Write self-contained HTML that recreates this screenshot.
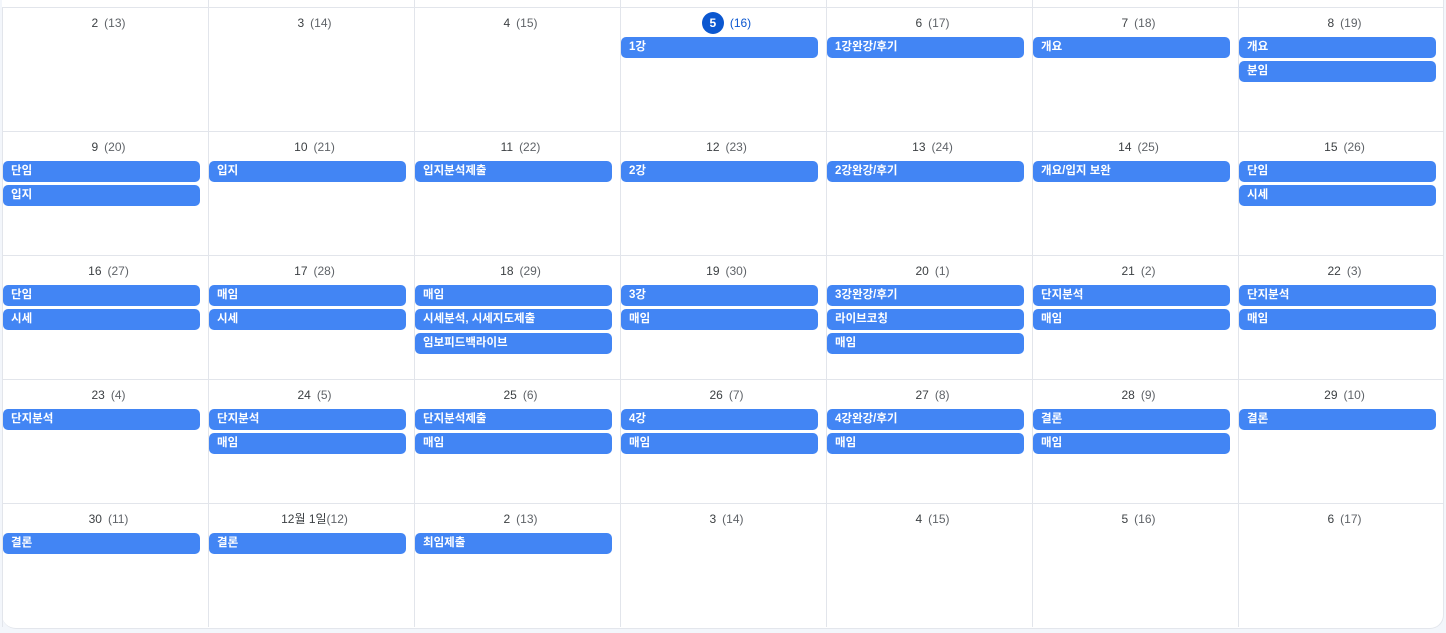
<!DOCTYPE html><html><head><meta charset="utf-8"><style>
body{margin:0;width:1446px;height:633px;background:#f3f6fb;font-family:"Liberation Sans","Noto Sans CJK KR",sans-serif;overflow:hidden;position:relative}
.cal{position:absolute;left:2px;top:-10px;width:1441px;height:638px;background:#fff;border-radius:0 0 14px 14px;border-right:1px solid #e3e6ec;border-bottom:1px solid #e3e6ec}
.g{position:absolute;left:2px;top:7px;display:grid;grid-template-columns:repeat(7,206px);grid-template-rows:repeat(5,124px)}
.c{border-left:1px solid #e2e5eb;border-top:1px solid #e2e5eb;box-sizing:border-box;position:relative}
.d{text-align:center;font-size:12px;color:#3c4043;height:29px;line-height:30px;padding-left:6px}
.d span{color:#5f6368;margin-left:6px}
.e{height:21px;width:197px;background:#4285f4;border-radius:5px;color:#fff;font-size:11.5px;font-weight:bold;line-height:21px;padding-left:8px;box-sizing:border-box;margin-bottom:3px}
.t{display:inline-block;width:22px;height:22px;border-radius:50%;background:#0b57d0;color:#fff;line-height:22px;font-weight:bold}
.t+span{color:#0b57d0}
.top{position:absolute;top:0;height:7px;border-left:1px solid #e2e5eb}
</style></head><body><div class="cal"></div>
<div class="top" style="left:208px"></div><div class="top" style="left:414px"></div><div class="top" style="left:620px"></div><div class="top" style="left:826px"></div><div class="top" style="left:1032px"></div><div class="top" style="left:1238px"></div>
<div class="g">
<div class="c"><div class="d">2<span>(13)</span></div></div>
<div class="c"><div class="d">3<span>(14)</span></div></div>
<div class="c"><div class="d">4<span>(15)</span></div></div>
<div class="c"><div class="d"><b class="t">5</b><span>(16)</span></div><div class="e">1강</div></div>
<div class="c"><div class="d">6<span>(17)</span></div><div class="e">1강완강/후기</div></div>
<div class="c"><div class="d">7<span>(18)</span></div><div class="e">개요</div></div>
<div class="c"><div class="d">8<span>(19)</span></div><div class="e">개요</div><div class="e">분임</div></div>

<div class="c"><div class="d">9<span>(20)</span></div><div class="e">단임</div><div class="e">입지</div></div>
<div class="c"><div class="d">10<span>(21)</span></div><div class="e">입지</div></div>
<div class="c"><div class="d">11<span>(22)</span></div><div class="e">입지분석제출</div></div>
<div class="c"><div class="d">12<span>(23)</span></div><div class="e">2강</div></div>
<div class="c"><div class="d">13<span>(24)</span></div><div class="e">2강완강/후기</div></div>
<div class="c"><div class="d">14<span>(25)</span></div><div class="e">개요/입지 보완</div></div>
<div class="c"><div class="d">15<span>(26)</span></div><div class="e">단임</div><div class="e">시세</div></div>

<div class="c"><div class="d">16<span>(27)</span></div><div class="e">단임</div><div class="e">시세</div></div>
<div class="c"><div class="d">17<span>(28)</span></div><div class="e">매임</div><div class="e">시세</div></div>
<div class="c"><div class="d">18<span>(29)</span></div><div class="e">매임</div><div class="e">시세분석, 시세지도제출</div><div class="e">임보피드백라이브</div></div>
<div class="c"><div class="d">19<span>(30)</span></div><div class="e">3강</div><div class="e">매임</div></div>
<div class="c"><div class="d">20<span>(1)</span></div><div class="e">3강완강/후기</div><div class="e">라이브코칭</div><div class="e">매임</div></div>
<div class="c"><div class="d">21<span>(2)</span></div><div class="e">단지분석</div><div class="e">매임</div></div>
<div class="c"><div class="d">22<span>(3)</span></div><div class="e">단지분석</div><div class="e">매임</div></div>

<div class="c"><div class="d">23<span>(4)</span></div><div class="e">단지분석</div></div>
<div class="c"><div class="d">24<span>(5)</span></div><div class="e">단지분석</div><div class="e">매임</div></div>
<div class="c"><div class="d">25<span>(6)</span></div><div class="e">단지분석제출</div><div class="e">매임</div></div>
<div class="c"><div class="d">26<span>(7)</span></div><div class="e">4강</div><div class="e">매임</div></div>
<div class="c"><div class="d">27<span>(8)</span></div><div class="e">4강완강/후기</div><div class="e">매임</div></div>
<div class="c"><div class="d">28<span>(9)</span></div><div class="e">결론</div><div class="e">매임</div></div>
<div class="c"><div class="d">29<span>(10)</span></div><div class="e">결론</div></div>

<div class="c"><div class="d">30<span>(11)</span></div><div class="e">결론</div></div>
<div class="c"><div class="d">12월 1일<span style="margin-left:0">(12)</span></div><div class="e">결론</div></div>
<div class="c"><div class="d">2<span>(13)</span></div><div class="e">최임제출</div></div>
<div class="c"><div class="d">3<span>(14)</span></div></div>
<div class="c"><div class="d">4<span>(15)</span></div></div>
<div class="c"><div class="d">5<span>(16)</span></div></div>
<div class="c"><div class="d">6<span>(17)</span></div></div>
</div></body></html>
